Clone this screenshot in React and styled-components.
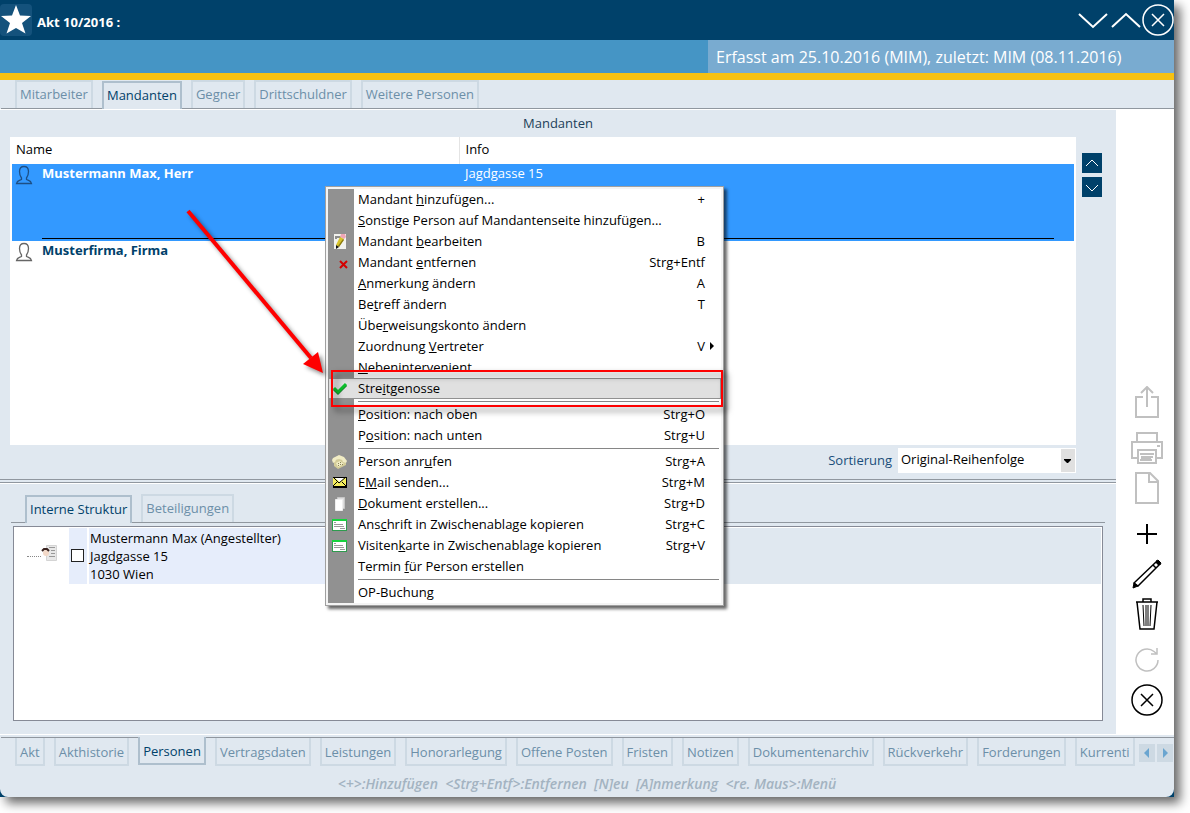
import { useState } from "react";
import styled, { createGlobalStyle, css } from "styled-components";

const GlobalStyle = createGlobalStyle`
  * {
    box-sizing: border-box;
  }
  body {
    margin: 0;
    background: #fff;
    color: #000;
    font-family: "Open Sans", "Noto Sans", sans-serif;
    font-size: 13px;
    line-height: 18px;
  }
  button, select {
    font: inherit;
    color: inherit;
    margin: 0;
    padding: 0;
    border: none;
    background: none;
  }
`;

const Page = styled.div`
  position: relative;
  min-height: 100vh;
  padding: 0 16px 16px 0;
  display: flex;
  overflow: hidden;
`;
const Window = styled.div`
  flex: 1;
  min-width: 0;
  display: flex;
  flex-direction: column;
  background: #00416a;
  box-shadow: 6px 6px 10px rgba(0, 0, 0, 0.6);
`;

const TitleBar = styled.header`
  height: 40px;
  display: flex;
  align-items: center;
  color: #fff;
`;
const StarButton = styled.button`
  width: 32px;
  height: 32px;
  border-radius: 4px;
  background: #14527c;
`;
const Title = styled.h1`
  flex: 1;
  margin: 0;
  padding: 4px 0 0 5px;
  font-family: "Noto Sans", sans-serif;
  font-size: 13px;
  line-height: 18px;
  font-weight: 700;
`;
const TitleButton = styled.button`
  width: ${(props) => props.$width || 33}px;
  height: 32px;
`;
const InfoBar = styled.div`
  height: 33px;
  display: flex;
  justify-content: flex-end;
  background: #4595c5;
`;
const Info = styled.div`
  width: 466px;
  padding: 0 8px;
  font-size: 16px;
  line-height: 34px;
  color: #fff;
  background: #79abd0;
`;
const Stripe = styled.div`
  height: 7px;
  background: #f6c112;
`;

const Body = styled.div`
  flex: 1;
  display: flex;
  flex-direction: column;
  background: #e0e8f0;
`;
const Columns = styled.div`
  flex: 1;
  display: flex;
  border-top: 1px solid #fff;
`;
const Main = styled.main`
  flex: 1;
  min-width: 0;
  display: flex;
  flex-direction: column;
`;

const Tabs = styled.div`
  display: flex;
  gap: 9px;
  height: 29px;
  margin: ${(props) => props.$margin || "0 0 0 1px"};
  padding-left: 14px;
  border-bottom: 1px solid #90979f;
`;
const Tab = styled.button`
  height: 28px;
  padding: 0 3px 2px;
  line-height: 24px;
  white-space: nowrap;
  color: #6c8fa8;
  border: 2px solid #cdd9e3;
  border-bottom: none;
  ${(props) =>
    props.$active &&
    css`
      margin-top: 1px;
      color: #00416a;
      background: #e0e8f0;
      border-color: #aebfcd;
    `}
`;

const PanelTitle = styled.h2`
  margin: 0;
  font-size: 13px;
  line-height: 27px;
  font-weight: 400;
  text-align: center;
  color: #1c3f5a;
`;
const PersonArea = styled.section`
  display: flex;
  gap: 6px;
  padding: 0 14px 0 10px;
`;
const PersonList = styled.div`
  flex: 1;
  min-height: 308px;
  background: #fff;
`;
const PersonTable = styled.table`
  width: 100%;
  table-layout: fixed;
  border-collapse: collapse;
  th {
    height: 27px;
    padding: 0 6px 4px;
    font-weight: 400;
    text-align: left;
  }
  th:first-child {
    width: 449px;
    border-right: 1px solid #e4e4e4;
  }
  td {
    padding: 0;
  }
`;
const PersonRow = styled.tr`
  color: ${(props) => (props.$selected ? "#fff" : "#00416a")};
`;
const NameCell = styled.div`
  height: 77px;
  margin-left: 2px;
  padding-bottom: 2px;
  display: flex;
  background: ${(props) => (props.$selected ? "#3399ff" : "none")};
  svg {
    flex: none;
    margin: 1px 9px 0 3px;
  }
  strong {
    flex: 1;
    font-family: "Noto Sans", sans-serif;
    border-bottom: ${(props) => (props.$selected ? "1px solid #000" : "none")};
  }
`;
const InfoCell = styled.div`
  height: 77px;
  margin-right: 2px;
  padding: 0 20px 2px 0;
  background: ${(props) => (props.$selected ? "#3399ff" : "none")};
  p {
    height: 75px;
    margin: 0;
    padding-left: 6px;
    border-bottom: ${(props) => (props.$selected ? "1px solid #000" : "none")};
  }
`;
const Steppers = styled.div`
  display: flex;
  flex-direction: column;
  gap: 4px;
  padding-top: 16px;
`;
const Stepper = styled.button`
  width: 20px;
  height: 20px;
  background: #00416a;
  svg {
    display: block;
  }
`;
const SortRow = styled.div`
  display: flex;
  justify-content: flex-end;
  align-items: center;
  gap: 6px;
  padding: 3px 40px 6px 0;
  color: #1a4e7a;
  label {
    padding-bottom: 2px;
  }
`;
const SelectBox = styled.div`
  position: relative;
  width: 178px;
  color: #000;
  svg {
    position: absolute;
    top: 1px;
    right: 1px;
    pointer-events: none;
  }
`;
const Select = styled.select`
  display: block;
  width: 100%;
  height: 25px;
  padding: 0 18px 4px 3px;
  appearance: none;
  border-radius: 0;
  background: #fff;
`;
const Splitter = styled.div`
  height: 5px;
  border-top: 1px solid #90979f;
  border-bottom: 1px solid #fff;
  &::before {
    content: "";
    display: block;
    height: 2px;
    border-bottom: 1px solid #90979f;
  }
`;

const Tree = styled.div`
  flex: 1;
  min-height: 195px;
  margin: 3px 13px 13px;
  padding: 1px;
  background: #fff;
  border: 1px solid #868a96;
`;
const TreeRow = styled.label`
  display: grid;
  grid-template-columns: 14px 28px 18px 1fr;
  align-items: center;
  padding-left: 12px;
  height: 56px;
  svg {
    margin-bottom: 6px;
  }
`;
const Branch = styled.span`
  border-bottom: 1px dotted #888;
`;
const CheckCell = styled.span`
  height: 56px;
  padding: 0 0 2px 2px;
  display: flex;
  align-items: center;
  background: #e6edfb;
`;
const Checkbox = styled.input`
  appearance: none;
  width: 13px;
  height: 13px;
  margin: 0;
  background: #fff;
  border: 1px solid #222;
`;
const TreeText = styled.span`
  height: 56px;
  margin-left: 2px;
  padding: 1px;
  white-space: pre-line;
  background: linear-gradient(90deg, #e6edfb 50%, #e0e8f0 50%);
`;

const Tools = styled.aside`
  width: 58px;
  display: flex;
  flex-direction: column;
  align-items: center;
  justify-content: flex-end;
  gap: 8px;
  padding: 0 0 18px 4px;
  background: #fff;
`;
const Tool = styled.button`
  width: 32px;
  height: 32px;
  margin-bottom: ${(props) => (props.$groupEnd ? 6 : 0)}px;
  color: ${(props) => (props.disabled ? "#c0c0c0" : "#000")};
  svg {
    display: block;
  }
`;

const Footer = styled.footer`
  background: #e0e8f0;
  border-top: 1px solid #fff;
  border-radius: 0 0 8px 8px;
  padding-top: 2px;
`;
const FooterTabs = styled.nav`
  display: flex;
  border-top: 1px solid #90979f;
  margin-left: 1px;
`;
const FooterTabList = styled.div`
  flex: 1;
  min-width: 0;
  display: flex;
  gap: 9px;
  padding: 0 6px 0 14px;
`;
const FooterTab = styled(Tab)`
  flex: none;
  padding: 0 3px;
  border: 2px solid #cdd9e3;
  border-top: none;
  line-height: 28px;
  ${(props) =>
    props.$active &&
    css`
      margin-top: -1px;
      border-color: #aebfcd;
    `}
`;
const ScrollButtons = styled.div`
  display: flex;
  gap: 2px;
  padding: 6px 1px 0 0;
`;
const ScrollButton = styled.button`
  width: 16px;
  height: 18px;
  background: #cdd9e3;
  svg {
    display: block;
  }
`;
const Hint = styled.p`
  margin: 0;
  padding: 9px 0 4px;
  font-size: 14px;
  line-height: 18px;
  font-style: italic;
  font-weight: 600;
  text-align: center;
  white-space: pre;
  color: #a3b3c1;
`;

const Menu = styled.div`
  position: absolute;
  top: 186px;
  left: 325px;
  width: 399px;
  padding: 2px;
  display: flex;
  flex-direction: column;
  background: #f4f4f4;
  border: 1px solid #a0a0a0;
  box-shadow: 3px 3px 3px rgba(0, 0, 0, 0.6);
`;
const MenuItem = styled.button`
  position: relative;
  display: grid;
  grid-template-columns: 26px 1fr auto 16px;
  align-items: start;
  height: 21px;
  line-height: 20px;
  text-align: left;
  background: linear-gradient(90deg, #919191 26px, #fff 26px);
  svg {
    display: block;
  }
  ${(props) =>
    props.$active &&
    css`
      background: #e0e0e0;
      box-shadow: inset 0 0 0 1px #919191;
    `}
`;
const Label = styled.span`
  padding-left: 4px;
`;
const Separator = styled.div`
  height: 5px;
  padding: 2px 2px 0 30px;
  background: linear-gradient(90deg, #919191 26px, #fff 26px);
  &::before {
    content: "";
    display: block;
    border-top: 1px solid #868686;
  }
`;
const Marker = styled.span`
  position: absolute;
  z-index: 1;
  top: -8px;
  left: 3px;
  right: -2px;
  height: 37px;
  border: 2px solid #fe0000;
  pointer-events: none;
  filter: drop-shadow(4px 4px 3px rgba(0, 0, 0, 0.6));
`;
const Arrow = styled.svg`
  position: absolute;
  top: 200px;
  left: 180px;
  pointer-events: none;
  filter: drop-shadow(3px 3px 2px rgba(0, 0, 0, 0.45));
`;

const Svg = ({ size = 32, width, height, children }) => (
  <svg
    width={width || size}
    height={height || size}
    viewBox={`0 0 ${width || size} ${height || size}`}
    fill="none"
    stroke="currentColor"
    aria-hidden="true"
  >
    {children}
  </svg>
);

const menuIcons = {
  edit: (
    <g stroke="none">
      <path fill="#f2f2ee" d="M6 3h12v15H6z" />
      <path fill="#8d8d8d" d="M7 5h6v2H9v1H7z" />
      <path fill="#efa6b6" d="M13 3h4l1 3-2 2-4-2z" />
      <path fill="#d8c42a" d="M12 6l4 2-5 8-3-2z" />
      <path fill="#8b7a10" d="M15 8l1 1-5 7-1-1z" />
      <path fill="#111" d="M8 14l3 2-3 2z" />
    </g>
  ),
  remove: <path stroke="#d40000" strokeWidth="2" d="M12 9l7 7M19 9l-7 7" />,
  check: (
    <g strokeWidth="3">
      <path stroke="#1c7a2c" d="M6 11l4 4 8-8" />
      <path stroke="#0cc02c" d="M6 10l4 4 8-8" />
    </g>
  ),
  phone: (
    <g stroke="none">
      <path fill="#d3cc98" d="M6 10l6-3 6 5v2l-8 4-4-3z" />
      <path fill="#f1ecc4" d="M4 9l1-2 6-3 5 2 3 4-1 2-3-1-1-2-3-1-3 1-1 2-2 1z" />
      <path fill="#f1ecc4" d="M8 12l4-2 4 3-6 3z" />
      <path fill="#8c875c" d="M10 12h1v1h-1zm2-1h1v1h-1zm0 2h1v1h-1zm-2 1h1v1h-1zm4-1h1v1h-1z" />
    </g>
  ),
  mail: (
    <g stroke="none">
      <path fill="#000" d="M5 5h14v11H5z" />
      <path fill="#f6ef5e" d="M5 6h13v8H5z" />
      <path fill="#fff" d="M7 6h9l-4 4z" />
      <path stroke="#000" fill="none" d="M5 5l6 6 7-6M5 14l4-4M18 14l-4-4" />
    </g>
  ),
  document: (
    <g>
      <path fill="#ddd" stroke="#c6c6c6" d="M9.500 4.500h7v11h-7z" />
      <path fill="#fff" stroke="#eee" d="M7.500 6.500h7v11h-7z" />
    </g>
  ),
  card: (
    <g stroke="none">
      <path fill="#2e9b4e" d="M4 5h15v12H4z" />
      <path fill="#18d23e" d="M4 5h15v2H4z" />
      <path fill="#fff" d="M5 7h13v9H5z" />
      <path fill="#999" d="M6 8h2v1H6zm0 2h9v1H6zm0 2h10v1H6zm6 2h5v1h-5z" />
    </g>
  ),
};

const menuItems = [
  { label: "Mandant &hinzufügen...", keys: "+" },
  { label: "&Sonstige Person auf Mandantenseite hinzufügen..." },
  { label: "Mandant &bearbeiten", keys: "B", icon: "edit" },
  { label: "Mandant &entfernen", keys: "Strg+Entf", icon: "remove" },
  { label: "&Anmerkung ändern", keys: "A" },
  { label: "Be&treff ändern", keys: "T" },
  { label: "Übe&rweisungskonto ändern" },
  { label: "Zuordnung &Vertreter", keys: "V", submenu: true },
  { label: "&Nebenintervenient" },
  { label: "Stre&itgenosse", icon: "check", active: true },
  null,
  { label: "&Position: nach oben", keys: "Strg+O" },
  { label: "P&osition: nach unten", keys: "Strg+U" },
  null,
  { label: "Person anr&ufen", keys: "Strg+A", icon: "phone" },
  { label: "E&Mail senden...", keys: "Strg+M", icon: "mail" },
  { label: "&Dokument erstellen...", keys: "Strg+D", icon: "document" },
  { label: "Ans&chrift in Zwischenablage kopieren", keys: "Strg+C", icon: "card" },
  { label: "Visiten&karte in Zwischenablage kopieren", keys: "Strg+V", icon: "card" },
  { label: "Termin &für Person erstellen" },
  null,
  { label: "OP-Buchun&g" },
];

const personTabs = ["Mitarbeiter", "Mandanten", "Gegner", "Drittschuldner", "Weitere Personen"];
const structureTabs = ["Interne Struktur", "Beteiligungen"];
const fileTabs = [
  "Akt",
  "Akthistorie",
  "Personen",
  "Vertragsdaten",
  "Leistungen",
  "Honorarlegung",
  "Offene Posten",
  "Fristen",
  "Notizen",
  "Dokumentenarchiv",
  "Rückverkehr",
  "Forderungen",
  "Kurrenti",
];
const persons = [
  { name: "Mustermann Max, Herr", info: "Jagdgasse 15" },
  { name: "Musterfirma, Firma", info: "" },
];

const tools = [
  {
    name: "Exportieren",
    disabled: true,
    groupEnd: true,
    icon: <path strokeWidth="2" d="M12 11H5v20h22V11h-7M16 21V2M10 7l6-6 6 6" />,
  },
  {
    name: "Drucken",
    disabled: true,
    icon: (
      <g strokeWidth="2">
        <path d="M6 10V1h20v9M6 26H1V10h30v16h-5" />
        <path d="M7 18h18v13H7zM9 22h14M10 25h12M9 28h12M26 14h3" />
        <path d="M10 27h10" />
      </g>
    ),
  },
  {
    name: "Neues Dokument",
    disabled: true,
    groupEnd: true,
    icon: <path strokeWidth="2" d="M5 1h14l8 8v22H5zM18 1v9h9" />,
  },
  { name: "Hinzufügen", icon: <path strokeWidth="2" d="M16 6v20M6 16h20" /> },
  {
    name: "Bearbeiten",
    icon: (
      <g>
        <path strokeWidth="1.500" d="M3 25L25 4l3 3L7 28zM22 7l3 3" />
        <path fill="#000" d="M25 3l2-1 3 3-1 2zM3 25l4 3-5 2z" />
      </g>
    ),
  },
  {
    name: "Löschen",
    groupEnd: true,
    icon: (
      <g>
        <path strokeWidth="1.500" d="M5 4h22M12 4V1h8v3M6 4l3 27h14l3-27" />
        <path d="M12 7l1 21M15 7v21M17 7v21M20 7l-1 21" />
      </g>
    ),
  },
  {
    name: "Aktualisieren",
    disabled: true,
    icon: <path strokeWidth="1.500" d="M27 16A11 11 0 1 1 23 7.500l3 2.500M26 4v6h-6" />,
  },
  {
    name: "Schließen",
    icon: (
      <g strokeWidth="1.500">
        <circle cx="16" cy="16" r="15" />
        <path d="M10 10l12 12M22 10L10 22" />
      </g>
    ),
  },
];

const PersonIcon = ({ color }) => (
  <svg
    width="18"
    height="20"
    viewBox="0 0 18 20"
    fill="none"
    stroke={color}
    strokeWidth="1.300"
    aria-hidden="true"
  >
    <path d="M6.500 13C5 11 4.500 9 4.500 6.500C4.500 3 6 1.500 9 1.500s4.500 1.500 4.500 5c0 2.500-.5 4.500-2 6.500v1.500c1.500 1 4.500 1 5 4H1.500c.5-3 3.500-3 5-4z" />
  </svg>
);

// "&" marks the access key, as in the menu resources
const MenuLabel = ({ text }) => {
  const [before, after = ""] = text.split("&");
  return (
    <Label>
      {before}
      <u>{after.charAt(0)}</u>
      {after.slice(1)}
    </Label>
  );
};

const ContextMenu = () => (
  <Menu role="menu">
    {menuItems.map((item, i) =>
      item ? (
        <MenuItem key={item.label} role="menuitem" $active={item.active}>
          <Svg width={26} height={21}>
            {menuIcons[item.icon]}
          </Svg>
          <MenuLabel text={item.label} />
          <span>{item.keys}</span>
          {item.submenu && (
            <Svg width={16} height={21}>
              <path fill="#000" stroke="none" d="M5 6l4 4-4 4z" />
            </Svg>
          )}
          {item.active && <Marker />}
        </MenuItem>
      ) : (
        <Separator key={i} role="separator" />
      )
    )}
  </Menu>
);

const TabBar = ({ items, initial, margin }) => {
  const [active, setActive] = useState(initial);
  return (
    <Tabs role="tablist" $margin={margin}>
      {items.map((item) => (
        <Tab
          key={item}
          role="tab"
          aria-selected={item === active}
          $active={item === active}
          onClick={() => setActive(item)}
        >
          {item}
        </Tab>
      ))}
    </Tabs>
  );
};

const App = () => {
  const [selected, setSelected] = useState(0);
  const [fileTab, setFileTab] = useState("Personen");

  return (
    <Page>
      <GlobalStyle />
      <Window>
        <TitleBar>
          <StarButton aria-label="Favorit">
            <Svg>
              <path fill="#fff" stroke="none" d="M16 1l4 10.500 11 .5-9 7 3.500 10.500L16 24l-9.500 5.500L10 19l-9-7 11-.5z" />
            </Svg>
          </StarButton>
          <Title>Akt 10/2016 :</Title>
          <TitleButton aria-label="Nächster Akt">
            <Svg>
              <path strokeWidth="2" d="M2 10l14 13 14-13" />
            </Svg>
          </TitleButton>
          <TitleButton aria-label="Voriger Akt">
            <Svg>
              <path strokeWidth="2" d="M2 23l14-13 14 13" />
            </Svg>
          </TitleButton>
          <TitleButton aria-label="Fenster schließen" $width={32}>
            <Svg>
              <circle cx="16" cy="16" r="15" strokeWidth="1.500" />
              <path strokeWidth="1.500" d="M10 10l12 12M22 10L10 22" />
            </Svg>
          </TitleButton>
        </TitleBar>
        <InfoBar>
          <Info>Erfasst am 25.10.2016 (MIM), zuletzt: MIM (08.11.2016)</Info>
        </InfoBar>
        <Stripe />

        <Body>
          <TabBar items={personTabs} initial="Mandanten" />
          <Columns>
            <Main>
              <PanelTitle>Mandanten</PanelTitle>
              <PersonArea>
                <PersonList>
                  <PersonTable>
                    <thead>
                      <tr>
                        <th>Name</th>
                        <th>Info</th>
                      </tr>
                    </thead>
                    <tbody>
                      {persons.map((person, i) => (
                        <PersonRow
                          key={person.name}
                          $selected={i === selected}
                          onClick={() => setSelected(i)}
                        >
                          <td>
                            <NameCell $selected={i === selected}>
                              <PersonIcon color={i === selected ? "#1d4f85" : "#666"} />
                              <strong>{person.name}</strong>
                            </NameCell>
                          </td>
                          <td>
                            <InfoCell $selected={i === selected}>
                              <p>{person.info}</p>
                            </InfoCell>
                          </td>
                        </PersonRow>
                      ))}
                    </tbody>
                  </PersonTable>
                </PersonList>
                <Steppers>
                  <Stepper aria-label="Nach oben">
                    <Svg size={20}>
                      <path stroke="#fff" d="M4 13l6-6 6 6" />
                    </Svg>
                  </Stepper>
                  <Stepper aria-label="Nach unten">
                    <Svg size={20}>
                      <path stroke="#fff" d="M4 8l6 6 6-6" />
                    </Svg>
                  </Stepper>
                </Steppers>
              </PersonArea>
              <SortRow>
                <label htmlFor="sort">Sortierung</label>
                <SelectBox>
                  <Select id="sort">
                    <option>Original-Reihenfolge</option>
                  </Select>
                  <Svg width={14} height={23}>
                    <path fill="#e0e0e0" stroke="none" d="M0 0h14v23H0z" />
                    <path fill="#000" stroke="none" d="M3 10h7v1l-3 3h-1l-3-3z" />
                  </Svg>
                </SelectBox>
              </SortRow>
              <Splitter />
              <TabBar items={structureTabs} initial="Interne Struktur" margin="10px 11px 0" />
              <Tree>
                <TreeRow>
                  <Branch />
                  <Svg width={20} height={18}>
                    <path fill="#e8e8e8" stroke="#d4d4d4" d="M5.500 1.500h10v15h-10z" />
                    <path stroke="#999" d="M8 3.500h6M10 6.500h4M10 9.500h4M8 12.500h6" />
                    <circle cx="5" cy="9" r="3" fill="#f3d9c8" stroke="none" />
                    <path stroke="#3a2420" strokeWidth="2" d="M1 7l2-2h3l2 2" />
                  </Svg>
                  <CheckCell>
                    <Checkbox type="checkbox" />
                  </CheckCell>
                  <TreeText>{"Mustermann Max (Angestellter)\nJagdgasse 15\n1030 Wien"}</TreeText>
                </TreeRow>
              </Tree>
            </Main>
            <Tools>
              {tools.map((tool) => (
                <Tool
                  key={tool.name}
                  aria-label={tool.name}
                  disabled={tool.disabled}
                  $groupEnd={tool.groupEnd}
                >
                  <Svg>{tool.icon}</Svg>
                </Tool>
              ))}
            </Tools>
          </Columns>
        </Body>

        <Footer>
          <FooterTabs>
            <FooterTabList role="tablist">
              {fileTabs.map((item) => (
                <FooterTab
                  key={item}
                  role="tab"
                  aria-selected={item === fileTab}
                  $active={item === fileTab}
                  onClick={() => setFileTab(item)}
                >
                  {item}
                </FooterTab>
              ))}
            </FooterTabList>
            <ScrollButtons>
              <ScrollButton aria-label="Zurück blättern">
                <Svg width={16} height={18}>
                  <path fill="#6aa5d0" stroke="none" d="M10 4v10L5 9z" />
                </Svg>
              </ScrollButton>
              <ScrollButton aria-label="Weiter blättern">
                <Svg width={16} height={18}>
                  <path fill="#6aa5d0" stroke="none" d="M6 4v10l5-5z" />
                </Svg>
              </ScrollButton>
            </ScrollButtons>
          </FooterTabs>
          <Hint>{"<+>:Hinzufügen  <Strg+Entf>:Entfernen  [N]eu  [A]nmerkung  <re. Maus>:Menü"}</Hint>
        </Footer>
      </Window>

      <ContextMenu />
      <Arrow width="160" height="190" viewBox="0 0 160 190" aria-hidden="true">
        <path stroke="#fe0000" strokeWidth="4" d="M8 11l123 147" />
        <path fill="#fe0000" d="M143 173l-5-21-15 12z" />
      </Arrow>
    </Page>
  );
};

export default App;
